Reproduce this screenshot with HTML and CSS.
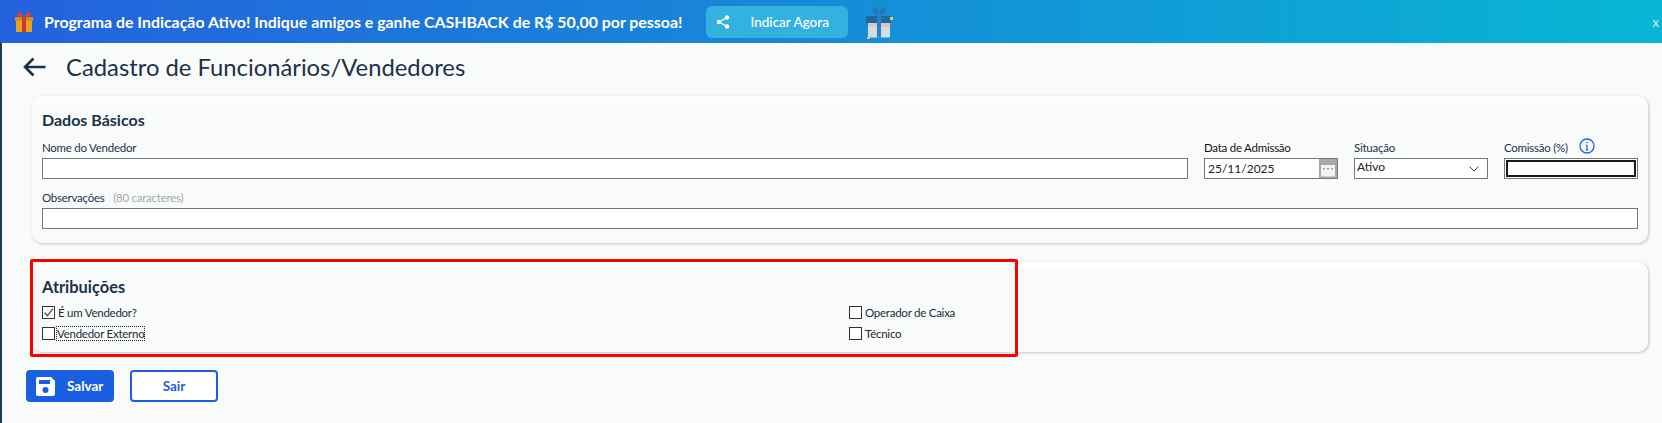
FILE: index.html
```html
<!DOCTYPE html>
<html lang="pt-BR">
<head>
    <meta charset="UTF-8">
    <meta name="viewport" content="width=device-width, initial-scale=1.0">
    <title>Cadastro de Funcionários/Vendedores</title>
    <link rel="stylesheet" href="styles.css">
</head>
<body>
    <div class="promo">
        <svg class="promo-gift" width="22" height="22" viewBox="0 0 22 22">
            <path d="M3 7h16v13a1 1 0 0 1-1 1H4a1 1 0 0 1-1-1z" fill="#e9a21f"/>
            <path d="M2 6h18v4H2z" fill="#d98a1b"/>
            <path d="M9 6h4v15H9z" fill="#c8382e"/>
            <path d="M11 6C8 1 4 0 4 3c0 2 4 3 7 3zm0 0c3-5 7-6 7-3 0 2-4 3-7 3z" fill="#d8433a"/>
        </svg>
        <span class="promo-text">Programa de Indicação Ativo! Indique amigos e ganhe CASHBACK de R$ 50,00 por pessoa!</span>
        <button class="promo-btn">
            <svg width="14" height="14" viewBox="0 0 14 14" fill="#fff">
                <circle cx="11" cy="2.5" r="2.2"/>
                <circle cx="3" cy="7" r="2.2"/>
                <circle cx="11" cy="11.5" r="2.2"/>
                <path d="M3 7l8-4.5M3 7l8 4.5" stroke="#fff" stroke-width="1.2"/>
            </svg>
            <span>Indicar Agora</span>
        </button>
        <svg class="promo-box" width="28" height="34" viewBox="0 0 28 34">
            <path d="M13 11C7 8 7 2 10 2s4 5 3 9zm2 0c5-3 7-7 4-8s-5 4-4 8z" fill="#2179b5"/>
            <path d="M3 16h22v15a1.500 1.500 0 0 1-1.500 1.500h-19A1.500 1.500 0 0 1 3 31z" fill="#d6dde2"/>
            <path d="M3 18h22v4H3z" fill="#e5c3c0"/>
            <path d="M1 11h25v7H1z" fill="#20699f"/>
            <path d="M12 11h4v21.500h-4z" fill="#2485c4"/>
            <path d="M25 12h3v3h-3zM2 32h3v2H2z" fill="#e4d92c"/>
        </svg>
        <span class="promo-close">x</span>
    </div>

    <div class="page">
        <div class="page-head">
            <svg width="24" height="20" viewBox="0 0 24 20" fill="none" stroke="#1c3148" stroke-width="2.6">
                <path d="M22.500 10H2M10.500 1.500L2 10l8.500 8.500"/>
            </svg>
            <h1>Cadastro de Funcionários/Vendedores</h1>
        </div>

        <section class="card card-basic">
            <h2>Dados Básicos</h2>
            <div class="row">
                <div class="field field-grow">
                    <label>Nome do Vendedor</label>
                    <div class="box"></div>
                </div>
                <div class="field field-small">
                    <label class="dark">Data de Admissão</label>
                    <div class="box box-date">
                        <span>25/11/2025</span>
                        <svg width="18" height="19" viewBox="0 0 18 19">
                            <path d="M0 0h18v19H0z" fill="#a8a8a8"/>
                            <path d="M2 6h14v11.500H2z" fill="#f2f2f2"/>
                            <path d="M4 9h2v1.500H4zM8 9h2v1.500H8zM12 9h2v1.500h-2z" fill="#a0a0a0"/>
                        </svg>
                    </div>
                </div>
                <div class="field field-small">
                    <label>Situação</label>
                    <div class="box box-select">
                        <span>Ativo</span>
                        <svg width="10" height="6" viewBox="0 0 10 6" fill="none" stroke="#444" stroke-width="1">
                            <path d="M.5 .5L5 5l4.500-4.500"/>
                        </svg>
                    </div>
                </div>
                <div class="field field-small">
                    <label class="label-info">
                        Comissão (%)
                        <svg width="16" height="16" viewBox="0 0 16 16" fill="none" stroke="#1f63e0" stroke-width="1.300">
                            <circle cx="8" cy="8" r="7"/>
                            <path d="M8 7v5M6.500 12h3M6.800 7H8" stroke-width="1.200"/>
                            <circle cx="8" cy="4.500" r=".8" fill="#1f63e0" stroke="none"/>
                        </svg>
                    </label>
                    <div class="box box-focus"><div class="focus-ring"></div></div>
                </div>
            </div>
            <div class="field field-notes">
                <label>Observações <span class="hint">(80 caracteres)</span></label>
                <div class="box"></div>
            </div>
        </section>

        <section class="card card-roles">
            <h2>Atribuições</h2>
            <div class="roles">
                <div class="check">
                    <span class="tick">
                        <svg width="13" height="13" viewBox="0 0 13 13" fill="none" stroke="#555" stroke-width="1.300">
                            <path d="M2.500 6.500l3 3.200 5.500-7"/>
                        </svg>
                    </span>
                    <span>É um Vendedor?</span>
                </div>
                <div class="check">
                    <span class="tick"></span>
                    <span>Operador de Caixa</span>
                </div>
                <div class="check">
                    <span class="tick"></span>
                    <span class="dotted">Vendedor Externo</span>
                </div>
                <div class="check">
                    <span class="tick"></span>
                    <span>Técnico</span>
                </div>
            </div>
            <div class="highlight"></div>
        </section>

        <div class="actions">
            <button class="btn btn-primary">
                <svg width="19" height="19" viewBox="0 0 19 19">
                    <path d="M2 0h13l4 4v13a2 2 0 0 1-2 2H2a2 2 0 0 1-2-2V2a2 2 0 0 1 2-2z" fill="#fff"/>
                    <path d="M3 3h11v4H3z" fill="#1b5fe1"/>
                    <circle cx="9.500" cy="13" r="3" fill="#1b5fe1"/>
                </svg>
                <span>Salvar</span>
            </button>
            <button class="btn btn-outline">Sair</button>
        </div>
    </div>
</body>
</html>
```

FILE: styles.css
```css
* {
    box-sizing: border-box;
}

html, body {
    height: 100%;
}

body {
    margin: 0;
    overflow: hidden;
    font-family: Lato, "Open Sans", sans-serif;
    color: #1c3148;
    background: #f9fbfb;
    display: flex;
    flex-direction: column;
}

.promo {
    height: 43px;
    flex-shrink: 0;
    display: flex;
    align-items: center;
    padding-left: 13px;
    color: #fff;
    background: linear-gradient(90deg, #2461dd, #08b6d3);
    overflow: hidden;
}

.promo-gift {
    flex-shrink: 0;
}

.promo-text {
    margin-left: 9px;
    font-size: 15.9px;
    font-weight: 700;
    white-space: nowrap;
}

.promo-btn {
    width: 142px;
    height: 32px;
    margin: 0 0 0 24px;
    padding: 0 0 0 10px;
    border: none;
    border-radius: 6px;
    background: #33b2e0;
    color: #fff;
    font: 500 13.5px Lato, sans-serif;
    display: flex;
    align-items: center;
}

.promo-btn span {
    margin-left: 20px;
}

.promo-box {
    margin: 0 0 0 17px;
    flex-shrink: 0;
}

.promo-close {
    margin-left: auto;
    margin-right: 3px;
    font-size: 13px;
    color: #d8f2f7;
}

.page {
    flex: 1;
    border-left: 2px solid #1c3b57;
    padding: 0 14px 0 24px;
}

.page-head {
    height: 53px;
    display: flex;
    align-items: center;
    gap: 19px;
    padding-bottom: 6px;
    margin-left: -3px;
}

.page-head h1 {
    margin: 0;
    font-size: 23.8px;
    font-weight: 400;
    color: #1c3148;
}

.card {
    position: relative;
    margin-left: 6px;
    background: #f9fbfb;
    border-top: 7px solid #fcfdfd;
    border-radius: 10px;
    box-shadow: 1px 1px 3px rgba(0, 0, 0, .22);
    padding: 7px 10px 0;
}

.card h2 {
    margin: 0;
    font-size: 16px;
    line-height: 20px;
    font-weight: 700;
    color: #1c3148;
}

.card-basic {
    height: 147px;
}

.row {
    display: flex;
    gap: 16px;
    margin-top: 10px;
}

.field label {
    display: block;
    height: 18px;
    font-size: 11.5px;
    letter-spacing: -.25px;
    line-height: 15px;
    color: #1c3148;
}

.field label.dark {
    color: #111;
}

.field-grow {
    flex: 1;
}

.field-small {
    width: 134px;
    flex-shrink: 0;
}

.field-notes {
    margin-top: 11px;
}

.hint {
    margin-left: 6px;
    color: #a3a8ad;
}

.label-info {
    position: relative;
}

.label-info svg {
    position: absolute;
    top: -2px;
    left: 75px;
}

.box {
    height: 21px;
    background: #fff;
    border: 1px solid #777;
    font-size: 12px;
    color: #222;
    display: flex;
    align-items: center;
    justify-content: space-between;
}

.box-date {
    padding-left: 3px;
}

.box-date svg {
    flex-shrink: 0;
}

.box-select {
    padding: 0 8px 4px 2px;
}

.box-select svg {
    margin-top: 4px;
}

.box-focus {
    padding: 1px;
}

.focus-ring {
    width: 100%;
    height: 100%;
    border: 2px solid #1a1a1a;
}

.card-roles {
    height: 90px;
    margin-top: 19px;
}

.card-roles h2 {
    padding-top: 1px;
    font-size: 16.4px;
}

.roles {
    display: grid;
    grid-template-columns: 807px 1fr;
    row-gap: 7px;
    margin-top: 8px;
    font-size: 11.5px;
    letter-spacing: -.25px;
    color: #1c2a38;
}

.check {
    height: 14px;
    display: flex;
    align-items: center;
    gap: 3px;
}

.tick {
    width: 13px;
    height: 13px;
    flex-shrink: 0;
    background: #fff;
    border: 1px solid #333;
    display: flex;
    align-items: center;
    justify-content: center;
}

.tick svg {
    flex-shrink: 0;
}

.dotted {
    outline: 1px dotted #222;
    margin-left: -1px;
}

.highlight {
    position: absolute;
    top: -10px;
    left: -2px;
    width: 988px;
    height: 98px;
    border: 3px solid #f00;
    border-radius: 2px;
}

.actions {
    display: flex;
    gap: 16px;
    margin-top: 18px;
}

.btn {
    width: 88px;
    height: 32px;
    border-radius: 4px;
    font: 700 13.5px Lato, sans-serif;
    display: flex;
    align-items: center;
    justify-content: center;
    padding: 0;
}

.btn-primary {
    background: #1b5fe1;
    border: none;
    color: #fff;
    justify-content: flex-start;
    padding-left: 10px;
    gap: 12px;
}

.btn-outline {
    background: #fff;
    border: 2px solid #1b5fe1;
    color: #1b5fe1;
}
```
